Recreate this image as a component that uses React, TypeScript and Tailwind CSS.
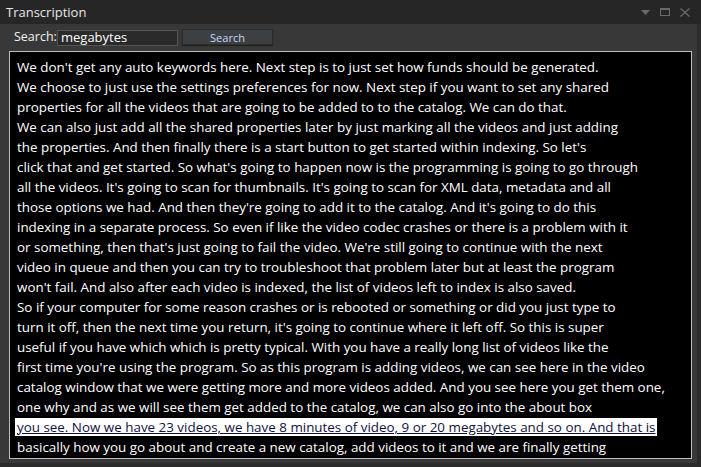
import React from "react";

const lines = [
  "We don't get any auto keywords here. Next step is to just set how funds should be generated.",
  "We choose to just use the settings preferences for now. Next step if you want to set any shared",
  "properties for all the videos that are going to be added to to the catalog. We can do that.",
  "We can also just add all the shared properties later by just marking all the videos and just adding",
  "the properties. And then finally there is a start button to get started within indexing. So let's",
  "click that and get started. So what's going to happen now is the programming is going to go through",
  "all the videos. It's going to scan for thumbnails. It's going to scan for XML data, metadata and all",
  "those options we had. And then they're going to add it to the catalog. And it's going to do this",
  "indexing in a separate process. So even if like the video codec crashes or there is a problem with it",
  "or something, then that's just going to fail the video. We're still going to continue with the next",
  "video in queue and then you can try to troubleshoot that problem later but at least the program",
  "won't fail. And also after each video is indexed, the list of videos left to index is also saved.",
  "So if your computer for some reason crashes or is rebooted or something or did you just type to",
  "turn it off, then the next time you return, it's going to continue where it left off. So this is super",
  "useful if you have which which is pretty typical. With you have a really long list of videos like the",
  "first time you're using the program. So as this program is adding videos, we can see here in the video",
  "catalog window that we were getting more and more videos added. And you see here you get them one,",
  "one why and as we will see them get added to the catalog, we can also go into the about box",
];
const highlighted =
  "you see. Now we have 23 videos, we have 8 minutes of video, 9 or 20 megabytes and so on. And that is";
const last =
  "basically how you go about and create a new catalog, add videos to it and we are finally getting";

export default function App() {
  return (
    <div
      className="w-[701px] h-[467px] bg-[#2b2b2b] flex flex-col overflow-hidden"
      style={{ fontFamily: '"Open Sans", "Noto Sans", sans-serif' }}
    >
      <div className="h-[24px] bg-[#262626] flex items-center pl-[6px] pr-[11px] shrink-0">
        <span className="text-[13px] text-[#e6e6e6] leading-none flex-1">Transcription</span>
        <div className="flex items-center gap-[10px]">
          <svg width="9" height="5" viewBox="0 0 9 5">
            <path d="M0 0 H9 L4.5 5 Z" fill="#6a6a6a" />
          </svg>
          <svg width="10" height="8" viewBox="0 0 10 8">
            <rect x="0.5" y="0.5" width="9" height="7" fill="none" stroke="#6a6a6a" />
            <rect x="0.5" y="0.5" width="9" height="1.5" fill="#6a6a6a" />
          </svg>
          <svg width="10" height="9" viewBox="0 0 10 9">
            <path d="M0.5 0.5 L9.5 8.5 M9.5 0.5 L0.5 8.5" stroke="#6a6a6a" strokeWidth="1.3" />
          </svg>
        </div>
      </div>
      <div className="h-[439px] bg-[#383838] mr-[4px] flex flex-col pl-[9px] pr-[5px] shrink-0">
        <div className="h-[27px] flex items-center pl-[5px] shrink-0">
          <span className="w-[43px] text-[12.5px] text-[#f0f0f0] leading-none">Search:</span>
          <div className="w-[121px] h-[16px] bg-[#2a2a2a] border border-[#545454] flex items-center pl-[3px]">
            <span className="text-[13px] text-white leading-none">megabytes</span>
          </div>
          <div className="ml-[4px] mb-[1px] w-[91px] h-[16px] bg-[#3d4042] border border-[#2c2c2c] flex items-center justify-center shadow-[0_1px_1px_#222]">
            <span className="text-[11px] text-[#c8d4ff] leading-none">Search</span>
          </div>
        </div>
        <div className="h-[408px] bg-black border border-[#bdbdbd] pt-[5px] pl-[5px] overflow-hidden shrink-0">
          {lines.map((l, i) => (
            <div key={i} className="h-[20px] text-[13.4px] text-white leading-[20px] pl-[2px] whitespace-nowrap">
              {l}
            </div>
          ))}
          <div className="h-[20px] flex items-center">
            <div className="bg-white h-[18px] text-[13.4px] text-[#101040] leading-[18px] pl-[2px] pr-[2px] whitespace-nowrap underline decoration-[#101040]">
              {highlighted}
            </div>
          </div>
          <div className="h-[20px] text-[13.4px] text-white leading-[20px] pl-[2px] whitespace-nowrap">
            {last}
          </div>
        </div>
      </div>
    </div>
  );
}
